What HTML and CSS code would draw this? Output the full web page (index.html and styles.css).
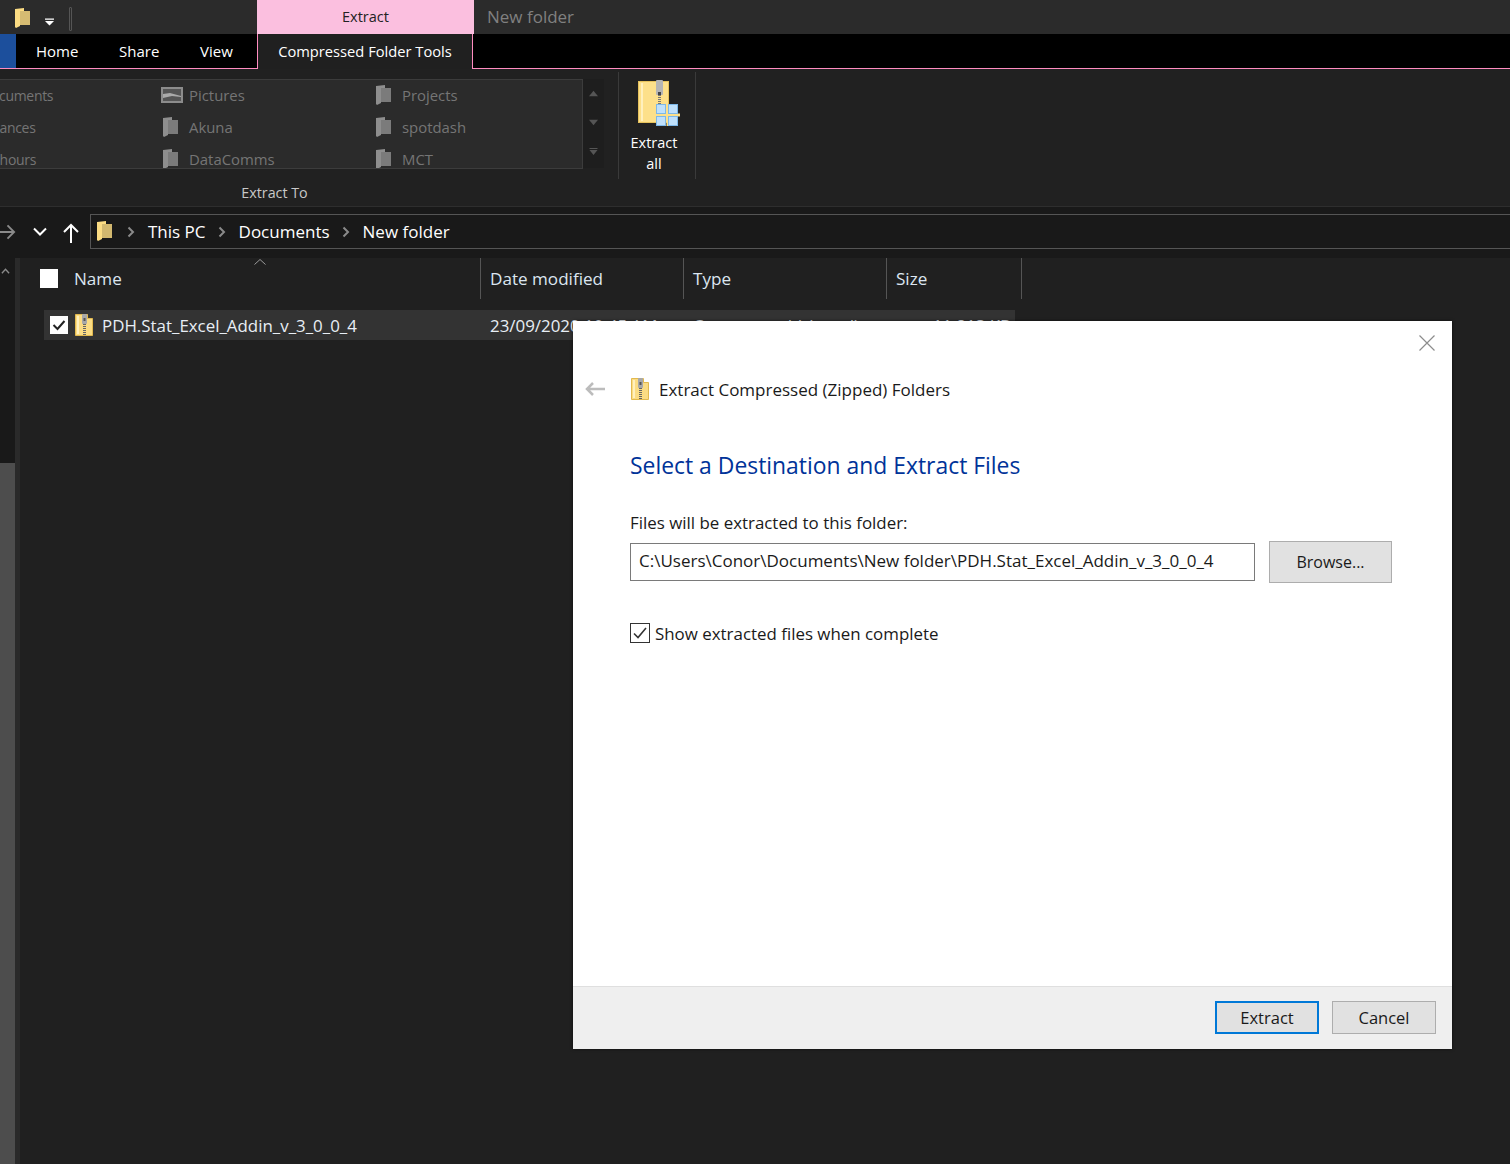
FILE: index.html
```html
<!DOCTYPE html>
<html lang="en">
<head>
  <meta charset="UTF-8" />
  <title>New folder</title>
  <link rel="stylesheet" href="styles.css">
</head>
<body>
  <svg class="defs" width="0" height="0">
    <symbol id="folder" viewBox="0 0 15 21">
      <path d="M5 1 H9 V3 H15 V17 H5 Z" fill="currentColor" opacity=".82"/>
      <path d="M0 1 L9 0 V3 L5 3 V18 L1 20 L0 19 Z" fill="currentColor"/>
    </symbol>
    <symbol id="zip" viewBox="0 0 18 22">
      <path d="M.5 .5 H12.500 V4.500 H17.500 V21.500 H.5 Z" fill="#fbdc83" stroke="#e2b94e"/>
      <rect x="2" y="2" width="2" height="18" fill="#fff0bd"/>
      <rect x="7" y="0" width="5" height="10" rx="1" fill="#a8a8a8"/>
      <rect x="8.500" y="4" width="2" height="3" fill="#555"/>
      <path d="M9.500 10 V22" stroke="#666" stroke-width="3" stroke-dasharray="1 1"/>
    </symbol>
    <symbol id="chev" viewBox="0 0 8 12">
      <path d="M1.500 1.500 L6 6 L1.500 10.500" fill="none" stroke="currentColor" stroke-width="2"/>
    </symbol>
  </svg>

  <div class="titlebar">
    <div class="qat">
      <svg class="qat-folder"><use href="#folder"/></svg>
      <svg class="qat-drop" viewBox="0 0 10 8"><path d="M0 0H10V1.500H0Z M0 3H10L5 8Z" fill="#fff"/></svg>
      <span class="qat-sep"></span>
    </div>
    <div class="context-tab">Extract</div>
    <div class="window-title">New folder</div>
  </div>

  <nav class="tabs">
    <span class="file-tab"></span>
    <a class="tab tab-home">Home</a>
    <a class="tab tab-share">Share</a>
    <a class="tab tab-view">View</a>
    <a class="tab tab-active">Compressed Folder Tools</a>
    <span class="tabs-rest"></span>
  </nav>

  <section class="ribbon">
    <div class="group-extract">
      <div class="gallery-row">
        <div class="gallery">
          <div class="gallery-grid">
            <div class="place place-cut"><svg class="place-icon"><use href="#folder"/></svg><span>Documents</span></div>
            <div class="place"><svg class="place-pic" viewBox="0 0 22 16"><rect x="1" y="1" width="20" height="14" fill="#555" stroke="#8c8c8c" stroke-width="2"/><path d="M2 7 L9 6 L20 9 V10 L11 9 L2 11Z" fill="#aaa"/></svg><span>Pictures</span></div>
            <div class="place"><svg class="place-icon"><use href="#folder"/></svg><span>Projects</span></div>
            <div class="place place-cut"><svg class="place-icon"><use href="#folder"/></svg><span>Finances</span></div>
            <div class="place"><svg class="place-icon"><use href="#folder"/></svg><span>Akuna</span></div>
            <div class="place"><svg class="place-icon"><use href="#folder"/></svg><span>spotdash</span></div>
            <div class="place place-cut"><svg class="place-icon"><use href="#folder"/></svg><span>Ot hours</span></div>
            <div class="place"><svg class="place-icon"><use href="#folder"/></svg><span>DataComms</span></div>
            <div class="place"><svg class="place-icon"><use href="#folder"/></svg><span>MCT</span></div>
          </div>
        </div>
        <div class="gallery-scroll">
          <svg viewBox="0 0 8 5"><path d="M0 5L4 0L8 5Z"/></svg>
          <svg viewBox="0 0 8 5"><path d="M0 0H8L4 5Z"/></svg>
          <svg viewBox="0 0 8 7"><path d="M0 0H8V1H0Z M0 2H8L4 7Z"/></svg>
        </div>
      </div>
      <div class="group-label">Extract To</div>
    </div>
    <div class="group-all">
      <svg class="extract-icon" viewBox="0 0 42 46">
        <rect x=".5" y="1.500" width="30" height="41" fill="#fde08a" stroke="#e6c25c"/>
        <rect x="3" y="3" width="2" height="38" fill="#fff0bd"/>
        <rect x="18" y="0" width="7" height="15" rx="1" fill="#b5b5b5"/>
        <rect x="20" y="12" width="3" height="4" fill="#444"/>
        <path d="M21.500 15 V42" stroke="#777" stroke-width="3" stroke-dasharray="1 1"/>
        <path d="M30 24 V46 M20 35 H42" stroke="#fde08a" stroke-width="3"/>
        <g fill="#bfe0fb" stroke="#7db8e8" stroke-width="1">
          <rect x="18.500" y="24.500" width="9" height="9"/>
          <rect x="30.500" y="24.500" width="9" height="9"/>
          <rect x="18.500" y="36.500" width="9" height="9"/>
          <rect x="30.500" y="36.500" width="9" height="9"/>
        </g>
      </svg>
      <div class="extract-label">Extract<br>all</div>
    </div>
  </section>

  <div class="addressbar">
    <svg class="nav-forward" viewBox="0 0 18 16"><path d="M0 8H16 M9 1L16 8L9 15" fill="none" stroke="#8a8a8a" stroke-width="2"/></svg>
    <svg class="nav-down" viewBox="0 0 14 9"><path d="M1 1.500L7 7.500L13 1.500" fill="none" stroke="#fff" stroke-width="2"/></svg>
    <svg class="nav-up" viewBox="0 0 16 20"><path d="M8 20V2 M1 9L8 2L15 9" fill="none" stroke="#fff" stroke-width="2"/></svg>
    <div class="address-box">
      <svg class="addr-folder"><use href="#folder"/></svg>
      <svg class="crumb-sep crumb-first"><use href="#chev"/></svg>
      <span class="crumb">This PC</span>
      <svg class="crumb-sep"><use href="#chev"/></svg>
      <span class="crumb">Documents</span>
      <svg class="crumb-sep"><use href="#chev"/></svg>
      <span class="crumb">New folder</span>
    </div>
  </div>

  <main class="content">
    <aside class="navpane">
      <svg class="nav-caret" viewBox="0 0 10 6"><path d="M1 5.500L5 1L9 5.500" fill="none" stroke="#8a8a8a" stroke-width="1.500"/></svg>
      <div class="nav-thumb"></div>
    </aside>
    <div class="files">
      <div class="file-head">
        <div class="col col-name">
          <span class="head-check"></span>
          <span>Name</span>
          <svg class="sort-caret" viewBox="0 0 12 6"><path d="M.5 5.500L6 .5L11.500 5.500" fill="none" stroke="#9a9a9a"/></svg>
        </div>
        <div class="col">Date modified</div>
        <div class="col">Type</div>
        <div class="col">Size</div>
      </div>
      <div class="file-row">
        <div class="cell-name">
          <span class="row-check"><svg viewBox="0 0 18 18"><path d="M3.500 9L7.500 13L14.500 5" fill="none" stroke="#222" stroke-width="2"/></svg></span>
          <svg class="row-zip"><use href="#zip"/></svg>
          <span>PDH.Stat_Excel_Addin_v_3_0_0_4</span>
        </div>
        <div class="cell">23/09/2020 10:45 AM</div>
        <div class="cell">Compressed (zipped)...</div>
        <div class="cell cell-size">11,813 KB</div>
      </div>
    </div>
  </main>

  <div class="dialog">
    <svg class="dialog-close" viewBox="0 0 16 16"><path d="M.5 .5L15.500 15.500 M15.500 .5L.5 15.500" stroke="#8c8c8c" stroke-width="1.200"/></svg>
    <div class="dialog-body">
      <div class="dialog-head">
        <svg class="dialog-back" viewBox="0 0 20 14"><path d="M20 7H2 M8 1L2 7L8 13" fill="none" stroke="#bcbcbc" stroke-width="2.500"/></svg>
        <svg class="dialog-zip"><use href="#zip"/></svg>
        <span>Extract Compressed (Zipped) Folders</span>
      </div>
      <h2 class="dialog-title">Select a Destination and Extract Files</h2>
      <p class="dialog-label">Files will be extracted to this folder:</p>
      <div class="path-row">
        <div class="path-input">C:\Users\Conor\Documents\New folder\PDH.Stat_Excel_Addin_v_3_0_0_4</div>
        <button class="browse">Browse...</button>
      </div>
      <label class="show-files">
        <span class="show-check"><svg viewBox="0 0 18 18"><path d="M3 9.500L7 13.500L15 4" fill="none" stroke="#333" stroke-width="1.600"/></svg></span>
        <span>Show extracted files when complete</span>
      </label>
    </div>
    <div class="dialog-foot">
      <button class="btn btn-default">Extract</button>
      <button class="btn">Cancel</button>
    </div>
  </div>
</body>
</html>
```

FILE: styles.css
```css
* { box-sizing: border-box; margin: 0; padding: 0; }
html, body { height: 100%; }
body {
  display: flex;
  flex-direction: column;
  height: 1164px;
  overflow: hidden;
  position: relative;
  background: #202020;
  color: #fff;
  font-family: "Open Sans", "Noto Sans", sans-serif;
  font-size: 16px;
}
.defs { position: absolute; }

/* title bar */
.titlebar { display: flex; height: 34px; background: #2b2b2b; }
.qat { display: flex; align-items: center; width: 257px; padding: 7px 0 0 15px; }
.qat-folder { width: 15px; height: 21px; color: #fbdc83; margin-top: -4px; }
.qat-drop { width: 9px; height: 8px; margin: 3px 0 0 15px; }
.qat-sep { width: 3px; height: 24px; margin: -4px 0 0 15px; border: 1px solid #555; border-radius: 1px; }
.context-tab {
  width: 217px;
  background: #fbbfdf;
  color: #222;
  font-size: 14.500px;
  line-height: 33px;
  text-align: center;
}
.window-title { padding-left: 13px; color: #808080; font-size: 17px; line-height: 33px; }

/* ribbon tabs */
.tabs { display: flex; height: 35px; background: #000; font-size: 15px; line-height: 34px; }
.file-tab { width: 16px; background: #1c4f9c; border-bottom: 1px solid #ff8cc0; }
.tab { border-bottom: 1px solid #ff8cc0; }
.tab-home { width: 83px; padding-left: 20px; }
.tab-share { width: 81px; padding-left: 20px; }
.tab-view { width: 77px; padding-left: 20px; }
.tab-active {
  width: 216px;
  text-align: center;
  background: #202020;
  border: 1px solid #ff8cc0;
  border-width: 0 1px;
  font-size: 14.700px;
}
.tabs-rest { flex: 1; border-bottom: 1px solid #ff8cc0; }

/* ribbon */
.ribbon { display: flex; height: 138px; padding-top: 3px; border-bottom: 1px solid #2e2e2e; background: #212121; }
.group-extract { width: 618px; }
.gallery-row { display: flex; height: 97px; padding-top: 7px; }
.gallery {
  width: 583px;
  height: 90px;
  background: #2b2b2b;
  border: 1px solid #3c3c3c;
  border-width: 1px 1px 1px 0;
  overflow: hidden;
}
.gallery-grid {
  display: grid;
  grid-template-columns: repeat(3, 213px);
  grid-auto-rows: 32px;
  margin: -1px 0 0 -50px;
}
.place { display: flex; align-items: center; gap: 11px; color: #757575; font-size: 14.900px; height: 32px; white-space: nowrap; }
.place-cut { font-size: 14px; letter-spacing: -.3px; }
.place-cut span { margin-left: 5px; }
.place-icon { width: 15px; height: 21px; color: #8e8e8e; }
.place-pic { width: 22px; height: 16px; margin: 0 -5px 0 -2px; }
.gallery-scroll {
  display: flex;
  flex-direction: column;
  align-items: center;
  gap: 22px;
  width: 21px;
  height: 89px;
  padding-top: 11px;
  background: #1e1e1e;
  fill: #555;
}
.gallery-scroll svg { width: 9px; height: 7px; }
.group-label { padding-right: 69px; text-align: center; color: #c8c8c8; font-size: 14.300px; line-height: 30px; margin-top: 9px; }
.group-all {
  width: 78px;
  height: 107px;
  border: 1px solid #3a3a3a;
  border-width: 0 1px;
  text-align: center;
  padding-right: 6px;
}
.extract-icon { display: block; width: 42px; height: 46px; margin: 8px 0 0 19px; }
.extract-label { font-size: 14.500px; line-height: 21px; margin-top: 6px; }

/* address bar */
.addressbar {
  display: flex;
  align-items: center;
  height: 51px;
  padding: 7px 0 9px;
  background: #191919;
}
.nav-forward { width: 17px; height: 16px; margin-left: -1px; }
.nav-down { width: 14px; height: 9px; margin-left: 17px; }
.nav-up { width: 16px; height: 20px; margin: 2px 0 0 16px; }
.address-box {
  display: flex;
  align-items: center;
  flex: 1;
  height: 35px;
  margin-left: 11px;
  padding-left: 6px;
  border: 1px solid #555;
  border-right: 0;
  font-size: 17px;
}
.addr-folder { width: 15px; height: 21px; color: #fbdc83; }
.crumb-sep { width: 8px; height: 12px; margin: 0 12.500px; color: #8a8a8a; }
.crumb-first { margin: 0 13px 0 15px; }

/* file list */
.content { display: flex; flex: 1; min-height: 0; }
.navpane { position: relative; width: 20px; background: #191919; border-right: 5px solid #2a2a2a; padding-top: 10px; }
.nav-caret { display: block; width: 9px; height: 6px; margin-left: 1px; }
.nav-thumb { position: absolute; left: 0; right: 0; top: 205px; bottom: 0; background: #4d4d4d; }
.files { flex: 1; }
.file-head { display: grid; grid-template-columns: 461px 203px 203px 135px; height: 41px; font-size: 17.100px; color: #dce6f0; }
.col { display: flex; align-items: center; padding-left: 9px; border-right: 1px solid #555; }
.col-name { position: relative; padding-left: 20px; gap: 16px; }
.head-check { width: 18px; height: 19px; background: #fff; }
.sort-caret { position: absolute; left: 234px; top: 1px; width: 12px; height: 6px; }
.file-row {
  display: grid;
  grid-template-columns: 436px 203px 203px 129px;
  align-items: center;
  width: 971px;
  height: 30px;
  margin: 11px 0 0 24px;
  background: #333;
  font-size: 16.900px;
  color: #e8eef5;
}
.cell-name { display: flex; align-items: center; padding-left: 6px; }
.row-check { width: 18px; height: 18px; background: #fff; }
.row-check svg { display: block; }
.row-zip { width: 18px; height: 22px; margin: 0 9px 0 7px; }
.cell { padding-left: 10px; white-space: nowrap; overflow: hidden; }
.cell-size { text-align: right; padding-right: 4px; }

/* dialog */
.dialog {
  position: absolute;
  left: 573px;
  top: 321px;
  display: flex;
  flex-direction: column;
  width: 879px;
  height: 728px;
  background: #fff;
  color: #1a1a1a;
  box-shadow: 0 0 3px rgba(0, 0, 0, .6);
}
.dialog-close { position: absolute; right: 17px; top: 14px; width: 16px; height: 16px; }
.dialog-body { flex: 1; padding: 56px 60px 0 57px; font-size: 16.900px; }
.dialog-head { display: flex; align-items: center; height: 24px; gap: 10px; font-size: 17px; }
.dialog-back { width: 20px; height: 14px; margin-left: -45px; margin-right: 16px; }
.dialog-zip { width: 18px; height: 22px; }
.dialog-title { margin-top: 49px; color: #003399; font-size: 22.900px; font-weight: 400; line-height: 32px; }
.dialog-label { margin-top: 29px; line-height: 24px; }
.path-row { display: flex; align-items: center; gap: 14px; margin-top: 6px; }
.path-input { width: 625px; height: 38px; padding-left: 8px; border: 1px solid #7a7a7a; font-size: 17px; line-height: 34px; white-space: nowrap; overflow: hidden; }
.browse, .btn { font-family: inherit; color: #1a1a1a; background: #e1e1e1; border: 1px solid #adadad; }
.browse { width: 123px; height: 42px; font-size: 16px; }
.show-files { display: flex; align-items: center; gap: 5px; margin-top: 38px; height: 24px; }
.show-check { width: 20px; height: 20px; border: 1px solid #333; background: #fff; }
.show-check svg { display: block; }
.dialog-foot {
  display: flex;
  justify-content: flex-end;
  gap: 13px;
  height: 63px;
  padding: 14px 16px 0 0;
  background: #efefef;
  border-top: 1px solid #dfdfdf;
}
.btn { width: 104px; height: 33px; font-size: 16.500px; }
.btn-default { border: 2px solid #0078d7; }
```
